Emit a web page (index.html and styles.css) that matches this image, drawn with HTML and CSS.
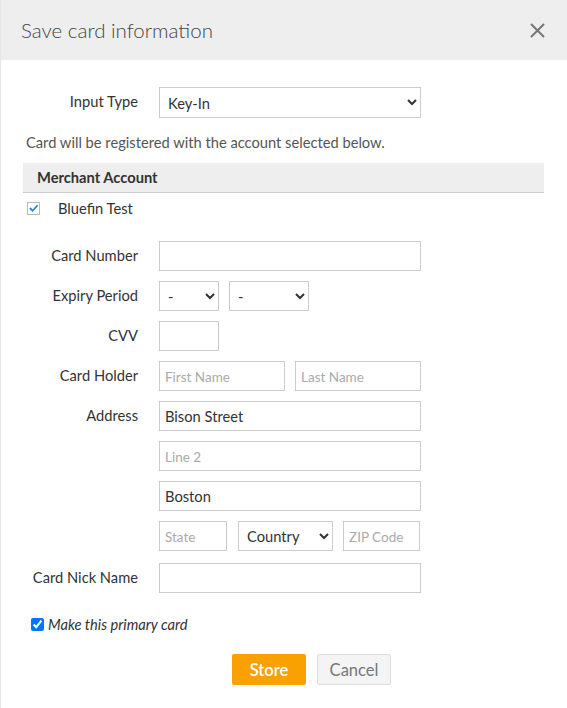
FILE: index.html
```html
<!DOCTYPE html>
<html lang="en">
<head>
    <meta charset="UTF-8">
    <meta name="viewport" content="width=device-width, initial-scale=1.0">
    <title>Save card information</title>
    <link rel="stylesheet" href="styles.css">
</head>
<body>
    <div class="modal">
        <div class="modal-header">
            <h2>Save card information</h2>
            <span class="close">
                <svg width="15" height="15" viewBox="0 0 15 15"><path d="M1 1 L14 14 M14 1 L1 14" stroke="#777" stroke-width="2"/></svg>
            </span>
        </div>
        <div class="modal-body">
            <div class="form-row first">
                <label>Input Type</label>
                <div class="fields">
                    <select class="wide tall"><option>Key-In</option></select>
                </div>
            </div>
            <p class="info">Card will be registered with the account selected below.</p>
            <div class="section-bar">Merchant Account</div>
            <div class="account">
                <span class="check-box">
                    <svg width="12" height="12" viewBox="0 0 12 12"><path d="M2 6 L5 9 L10.5 3" stroke="#1e88e5" stroke-width="2" fill="none"/></svg>
                </span>
                <span>Bluefin Test</span>
            </div>

            <div class="form-row">
                <label>Card Number</label>
                <div class="fields"><input type="text" class="wide"></div>
            </div>
            <div class="form-row">
                <label>Expiry Period</label>
                <div class="fields">
                    <select class="month"><option>-</option></select>
                    <select class="year"><option>-</option></select>
                </div>
            </div>
            <div class="form-row">
                <label>CVV</label>
                <div class="fields"><input type="text" class="cvv"></div>
            </div>
            <div class="form-row">
                <label>Card Holder</label>
                <div class="fields">
                    <input type="text" class="half" placeholder="First Name">
                    <input type="text" class="half" placeholder="Last Name">
                </div>
            </div>
            <div class="form-row">
                <label>Address</label>
                <div class="fields"><input type="text" class="wide" value="Bison Street"></div>
            </div>
            <div class="form-row">
                <label></label>
                <div class="fields"><input type="text" class="wide" placeholder="Line 2"></div>
            </div>
            <div class="form-row">
                <label></label>
                <div class="fields"><input type="text" class="wide" value="Boston"></div>
            </div>
            <div class="form-row state-row">
                <label></label>
                <div class="fields">
                    <input type="text" class="state" placeholder="State">
                    <select class="country"><option>Country</option></select>
                    <input type="text" class="zip" placeholder="ZIP Code">
                </div>
            </div>
            <div class="form-row">
                <label>Card Nick Name</label>
                <div class="fields"><input type="text" class="wide"></div>
            </div>

            <div class="primary">
                <input type="checkbox" checked>
                <span>Make this primary card</span>
            </div>

            <div class="actions">
                <button class="store-btn">Store</button>
                <button class="cancel-btn">Cancel</button>
            </div>
        </div>
    </div>
</body>
</html>
```

FILE: styles.css
```css
body {
    font-family: Lato, "Open Sans", Arial, sans-serif;
    margin: 0;
    padding: 0;
    background-color: white;
    color: #333;
    font-size: 14.7px;
}
.modal {
    width: 567px;
    height: 708px;
    border-left: 1px solid #e6e6e6;
    box-sizing: border-box;
}
.modal-header {
    height: 60px;
    background-color: #eeeeee;
    display: flex;
    align-items: center;
    justify-content: space-between;
    padding: 0 22px 0 20px;
}
.modal-header h2 {
    margin: 0;
    font-size: 20.5px;
    font-weight: 300;
    color: #444;
}
.close {
    display: flex;
    cursor: pointer;
}
.modal-body {
    padding: 0 23px 0 22px;
}
.form-row {
    display: flex;
    align-items: center;
    margin-bottom: 10px;
}
.form-row.first {
    margin-top: 27px;
    margin-bottom: 0;
}
.form-row.state-row {
    margin-bottom: 12px;
}
.form-row label {
    width: 115px;
    text-align: right;
    margin-right: 21px;
    margin-top: -3px;
    color: #333;
}
.fields {
    display: flex;
    gap: 10px;
}
input, select {
    font-family: Lato, "Open Sans", Arial, sans-serif;
    font-size: 14.7px;
    color: #333;
    height: 30px;
    border: 1px solid #cccccc;
    border-radius: 0;
    box-sizing: border-box;
    padding: 0 5px;
    background-color: white;
}
select {
    padding: 0 4px;
}
input::placeholder {
    color: #aaa;
    font-size: 13.5px;
}
select.tall {
    height: 31px;
}
.wide {
    width: 262px;
}
.month {
    width: 60px;
}
.year {
    width: 80px;
}
.cvv {
    width: 60px;
}
.half {
    width: 126px;
}
.state {
    width: 68px;
}
.country {
    width: 95px;
    margin-left: 1px;
}
.zip {
    width: 77px;
}
.info {
    margin: 14px 0 0 3px;
    line-height: 20px;
    color: #555;
}
.section-bar {
    margin-top: 11px;
    height: 29px;
    line-height: 29px;
    background-color: #eeeeee;
    border-bottom: 1px solid #cccccc;
    padding-left: 14px;
    font-weight: 700;
    color: #333;
}
.account {
    display: flex;
    align-items: center;
    height: 30px;
    margin-bottom: 18px;
}
.check-box {
    width: 11px;
    height: 11px;
    border: 1px solid #bbb;
    margin-left: 4px;
    margin-right: 18px;
    display: flex;
    align-items: center;
    justify-content: center;
}
.primary {
    display: flex;
    align-items: center;
    margin-top: 22px;
    font-style: italic;
}
.primary input {
    width: 13px;
    height: 13px;
    margin: 0 4px 0 8px;
    padding: 0;
}
.actions {
    display: flex;
    gap: 11px;
    margin-top: 21px;
    padding-left: 209px;
}
.store-btn, .cancel-btn {
    width: 74px;
    height: 31px;
    font-family: Lato, "Open Sans", Arial, sans-serif;
    font-size: 16.5px;
    border-radius: 2px;
    cursor: pointer;
}
.store-btn {
    background-color: #f9a100;
    border: none;
    color: white;
    font-weight: 600;
}
.cancel-btn {
    background-color: #f4f4f4;
    border: 1px solid #dddddd;
    color: #777;
}
```
